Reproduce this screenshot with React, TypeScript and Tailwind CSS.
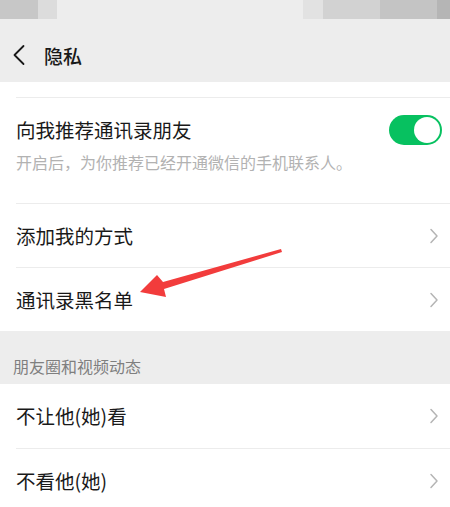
const font = { fontFamily: '"Noto Sans CJK SC", "Noto Sans", sans-serif' };

const Chevron = () => (
  <svg width="10" height="16" viewBox="0 0 10 16" fill="none">
    <polyline points="2,1.5 8,8 2,14.5" stroke="#b5b5b5" strokeWidth="1.5" strokeLinecap="round" strokeLinejoin="round" />
  </svg>
);

const Row = ({ label, border = true }: { label: string; border?: boolean }) => (
  <div className="pl-4">
    <div className={`h-[64px] flex items-center justify-between pr-[11px] ${border ? 'border-t border-[#ececec]' : ''}`}>
      <span className="text-[19.5px] text-[#191919] leading-none">{label}</span>
      <Chevron />
    </div>
  </div>
);

const Toggle = () => (
  <div className="w-[53px] h-[30px] rounded-full bg-[#07c160] flex items-center justify-end pr-[2px]">
    <div className="w-[26px] h-[26px] rounded-full bg-white" />
  </div>
);

export default function App() {
  return (
    <div className="relative w-[450px] h-[507px] overflow-hidden bg-white" style={font}>
      {/* status bar (blurred) */}
      <div className="flex h-[19px]">
        <div className="w-[38px] bg-[#c7c7c7]" />
        <div className="w-[19px] bg-[#dcdcdc]" />
        <div className="w-[246px] bg-[#ededed]" />
        <div className="w-[20px] bg-[#e2e2e2]" />
        <div className="w-[57px] bg-[#d2d2d2]" />
        <div className="w-[57px] bg-[#c4c4c4]" />
        <div className="flex-1 bg-[#b5b5b5]" />
      </div>

      {/* header */}
      <div className="h-[63px] bg-[#ededed] flex items-center pt-[9px]">
        <svg className="ml-[12px]" width="14" height="22" viewBox="0 0 14 22" fill="none">
          <polyline points="11.5,2 2.5,11 11.5,20" stroke="#191919" strokeWidth="1.8" strokeLinecap="round" strokeLinejoin="round" />
        </svg>
        <span className="ml-[18px] text-[19px] text-[#191919] font-medium leading-none">隐私</span>
      </div>

      {/* contacts section */}
      <div className="bg-white">
        <div className="h-[15px]" />
        <div className="pl-4">
          <div className="border-t border-[#ececec] h-[106px] flex flex-col pr-2">
            <div className="flex items-center justify-between mt-[17px]">
              <span className="text-[19.5px] text-[#191919] leading-none">向我推荐通讯录朋友</span>
              <Toggle />
            </div>
            <span className="mt-[9px] text-[16px] text-[#b2b2b2] leading-none">开启后，为你推荐已经开通微信的手机联系人。</span>
          </div>
        </div>
        <Row label="添加我的方式" />
        <Row label="通讯录黑名单" />
      </div>

      {/* moments section */}
      <div className="h-[53px] bg-[#ededed] flex items-end pl-[13px] pb-[10px]">
        <span className="text-[16px] text-[#7f7f7f] leading-none">朋友圈和视频动态</span>
      </div>
      <div className="bg-white">
        <Row label="不让他(她)看" border={false} />
        <Row label="不看他(她)" />
      </div>

      {/* annotation arrow */}
      <svg className="absolute left-0 top-0" width="450" height="507" viewBox="0 0 450 507">
        <polygon points="281,249 163,282 157,275 140,292 166,297 164,289 282,252" fill="#f23c3c" />
      </svg>
    </div>
  );
}
